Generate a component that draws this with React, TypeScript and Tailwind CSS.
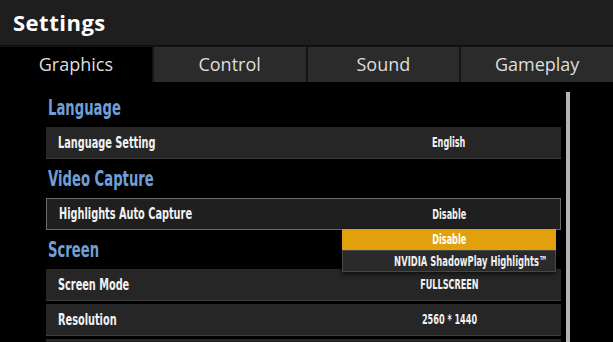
import React from 'react';

const narrow = { fontFamily: '"DejaVu Sans", "Liberation Sans", sans-serif' };

const tabs = ['Graphics', 'Control', 'Sound', 'Gameplay'];

function Heading({ children }: { children: React.ReactNode }) {
    return (
        <div className="h-[39px] pl-[2px] pt-[7px] text-[22px] leading-[26px] font-bold text-[#6e9fd6]">
            <span className="inline-block origin-left scale-x-[0.6] whitespace-nowrap">{children}</span>
        </div>
    );
}

function Row({ label, value, focused = false, className = '' }: { label: string; value: string; focused?: boolean; className?: string }) {
    return (
        <div className={`flex h-[32px] items-center ${focused ? 'border border-[#6b6b6b] bg-[#1f1f1f]' : 'border-b border-[#3d3d3d] bg-[#262626]'} ${className}`}>
            <div className="w-[291px] pl-[12px] text-[16px] font-bold text-[#f2f2f2]">
                <span className="inline-block origin-left scale-x-[0.61] whitespace-nowrap">{label}</span>
            </div>
            <div className="flex-1 text-center text-[14px] font-bold text-[#f2f2f2]">
                <span className="inline-block scale-x-[0.58] whitespace-nowrap">{value}</span>
            </div>
        </div>
    );
}

export default function App() {
    return (
        <div className="w-[613px] h-[342px] overflow-hidden bg-black" style={{ fontFamily: '"Open Sans", "Liberation Sans", sans-serif' }}>
            <div className="h-[46px] bg-[#1e1e1e] pl-[13px] flex items-center border-b border-[#0c0c0c]">
                <span className="text-[22px] font-bold text-white tracking-[0.5px]">Settings</span>
            </div>
            <div className="flex h-[36px] gap-[2px] bg-[#151515] pt-[1px]">
                {tabs.map((t, i) => (
                    <div key={t} className={`flex flex-1 items-center justify-center text-[18px] text-[#dedede] ${i === 0 ? 'bg-black' : 'bg-[#2b2b2b]'}`}>{t}</div>
                ))}
            </div>
            <div className="relative flex" style={narrow}>
                <div className="ml-[46px] w-[515px] pt-[6px]">
                    <Heading>Language</Heading>
                    <Row label="Language Setting" value="English" />
                    <Heading>Video Capture</Heading>
                    <Row label="Highlights Auto Capture" value="Disable" focused />
                    <Heading>Screen</Heading>
                    <Row label="Screen Mode" value="FULLSCREEN" />
                    <Row label="Resolution" value="2560 * 1440" className="mt-[3px]" />
                    <div className="mt-[3px] h-[32px] bg-[#262626]" />
                </div>
                <div className="ml-[5px] mt-[10px] h-[260px] w-[4px] bg-[#b4b4b4]" />
                <div className="absolute left-[342px] top-[147px] w-[214px] shadow-[0_2px_4px_rgba(0,0,0,0.6)]">
                    <div className="h-[21px] bg-[#e0a10d] text-center text-[14px] leading-[21px] font-bold text-white">
                        <span className="inline-block scale-x-[0.58] whitespace-nowrap">Disable</span>
                    </div>
                    <div className="h-[22px] border border-[#474747] bg-[#2a2a2a] text-center text-[14px] leading-[20px] font-bold text-[#f0f0f0]">
                        <span className="inline-block scale-x-[0.6] whitespace-nowrap">NVIDIA ShadowPlay Highlights™</span>
                    </div>
                </div>
            </div>
        </div>
    );
}
